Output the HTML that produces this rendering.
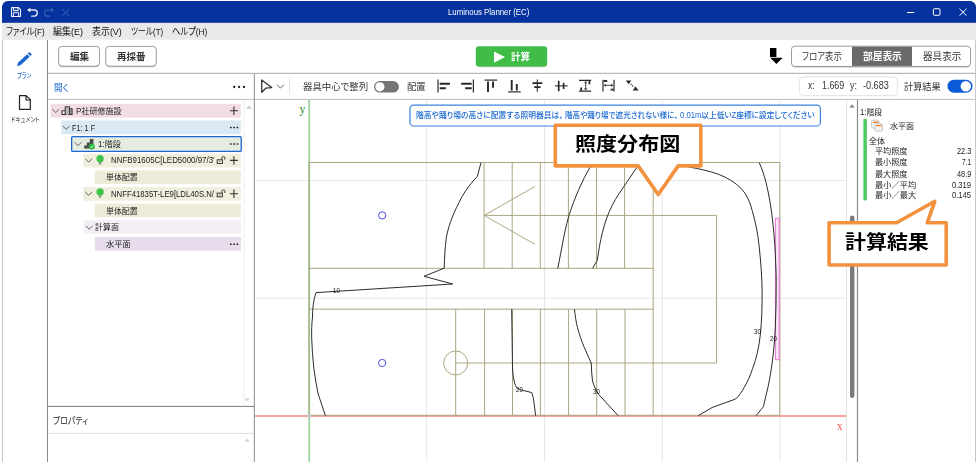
<!DOCTYPE html>
<html lang="ja">
<head>
<meta charset="utf-8">
<title>Luminous Planner (EC)</title>
<style>
html,body{margin:0;padding:0;}
body{width:979px;height:468px;overflow:hidden;background:#fff;position:relative;
 font-family:"Liberation Sans","Noto Sans CJK JP",sans-serif;color:#222;font-size:9px;}
.abs{position:absolute;}
.t{position:absolute;white-space:nowrap;transform-origin:0 50%;font-feature-settings:"palt";}
.btn{position:absolute;box-sizing:border-box;border:1px solid #9c9c9c;border-radius:3.5px;background:#fff;
 box-shadow:0 1px 1.5px rgba(0,0,0,.28);}
.hl{position:absolute;height:1px;}
.vl{position:absolute;width:1px;}
.row{position:absolute;height:13.6px;}
svg{position:absolute;left:0;top:0;overflow:visible;}
</style>
</head>
<body>
<svg width="979" height="468" viewBox="0 0 979 468" fill="none">
<defs><filter id="sh" x="-10%" y="-20%" width="120%" height="150%"><feGaussianBlur stdDeviation="0.7"/></filter></defs>
<path d="M2 23 V7 A6 6 0 0 1 8 1 H970 A6 6 0 0 1 976 7 V23 Z" fill="#05329f"/>
<rect x="2" y="22.8" width="974" height="17" fill="#e9e9e9"/>
<path d="M2.5 40 V462 M975.5 40 V462" stroke="#c8c8c8" stroke-width="1"/>
<path d="M47.5 40 V462" stroke="#8a8a8a" stroke-width="1"/>
<path d="M48 73.3 H975" stroke="#a8a8a8" stroke-width="1"/>
<path d="M48 99.4 H975" stroke="#bcbcbc" stroke-width="1"/>
<path d="M254.3 73.5 V462" stroke="#8a8a8a" stroke-width="1"/>
<path d="M48 406.4 H254" stroke="#7d7d7d" stroke-width="1"/>
<path d="M48 433.4 H254" stroke="#e0e0e0" stroke-width="1"/>
<path d="M244 100 V406" stroke="#efefef" stroke-width="1"/>
<path d="M846.6 100 V462" stroke="#e2e2e2" stroke-width="1"/>
<path d="M857.5 100 V462" stroke="#8a8a8a" stroke-width="1.2"/>
<rect x="850" y="215.5" width="4.4" height="182.5" rx="2.2" fill="#7a7a7a"/>
<rect x="58.9" y="47.4" width="40.4" height="19.8" rx="3.5" fill="#000" opacity="0.28" filter="url(#sh)"/>
<rect x="58.6" y="46.4" width="41.0" height="19.8" rx="3.5" fill="#fff" stroke="#9c9c9c" stroke-width="1"/>
<rect x="106.0" y="47.4" width="50.0" height="19.8" rx="3.5" fill="#000" opacity="0.28" filter="url(#sh)"/>
<rect x="105.7" y="46.4" width="50.6" height="19.8" rx="3.5" fill="#fff" stroke="#9c9c9c" stroke-width="1"/>
<rect x="476.1" y="47.2" width="70.8" height="20" rx="3.5" fill="#000" opacity="0.22" filter="url(#sh)"/>
<rect x="475.8" y="46.2" width="71.4" height="20.4" rx="3.3" fill="#3fbd47"/>
<rect x="791.8" y="47.2" width="178.4" height="20.2" rx="3.2" fill="#000" opacity="0.28" filter="url(#sh)"/>
<rect x="791.5" y="46.2" width="179" height="20.2" rx="3.2" fill="#fff" stroke="#9a9a9a" stroke-width="1"/>
<rect x="852" y="46.7" width="60" height="19.2" fill="#6a6a6a"/>
<rect x="799.3" y="76.8" width="98" height="18.8" rx="4" fill="#fff" stroke="#e4e4e4" stroke-width="1"/>
<rect x="374" y="81" width="25" height="11.6" rx="5.8" fill="#767676"/>
<circle cx="379.9" cy="86.8" r="4.6" fill="#fff"/>
<rect x="947.5" y="79.7" width="25" height="13" rx="6.5" fill="#0a5bd7"/>
<circle cx="965.8" cy="86.2" r="5.2" fill="#fff"/>
<path d="M289.6 78.5 V94.6" stroke="#e2e2e2" stroke-width="1"/>
<rect x="50.6" y="103.90" width="190.3" height="13.7" fill="#f2dde3"/>
<rect x="61.3" y="120.53" width="179.6" height="13.7" fill="#d9e8f2"/>
<rect x="71.65" y="136.65" width="169.6" height="14.8" rx="1.2" fill="#e4ece1" stroke="#1b66d2" stroke-width="1.3"/>
<rect x="83.4" y="153.79" width="157.5" height="13.7" fill="#f0eedc"/>
<rect x="94.8" y="170.42" width="146.1" height="13.7" fill="#eeecd9"/>
<rect x="83.4" y="187.05" width="157.5" height="13.7" fill="#f0eedc"/>
<rect x="94.8" y="203.68" width="146.1" height="13.7" fill="#eeecd9"/>
<rect x="83.4" y="220.31" width="157.5" height="13.7" fill="#f4eef6"/>
<rect x="94.8" y="236.94" width="146.1" height="13.7" fill="#e7dceb"/>
</svg>
<svg width="979" height="468" viewBox="0 0 979 468">
<defs><clipPath id="cv"><rect x="255" y="100" width="591.5" height="362"/></clipPath></defs>
<g clip-path="url(#cv)" fill="none">
<line x1="426.7" y1="100" x2="426.7" y2="462" stroke="#e6e6e6" stroke-width="1"/>
<line x1="544.5" y1="100" x2="544.5" y2="462" stroke="#e6e6e6" stroke-width="1"/>
<line x1="662.3" y1="100" x2="662.3" y2="462" stroke="#e6e6e6" stroke-width="1"/>
<line x1="780.0" y1="100" x2="780.0" y2="462" stroke="#e6e6e6" stroke-width="1"/>
<line x1="255" y1="180.6" x2="847" y2="180.6" stroke="#e6e6e6" stroke-width="1"/>
<line x1="255" y1="298.2" x2="847" y2="298.2" stroke="#e6e6e6" stroke-width="1"/>
<line x1="255" y1="415.95" x2="846.2" y2="415.95" stroke="#f9a3a3" stroke-width="1.9"/>
<line x1="309.2" y1="100" x2="309.2" y2="462" stroke="#a3d3a3" stroke-width="1.9"/>
<g stroke="#aca680" stroke-width="1">
<rect x="309" y="162.5" width="470.8" height="252.8"/>
<line x1="484.1" y1="162.5" x2="484.1" y2="268.3"/>
<line x1="512.2" y1="162.5" x2="512.2" y2="268.3"/>
<line x1="540.3" y1="162.5" x2="540.3" y2="268.3"/>
<line x1="568.4" y1="162.5" x2="568.4" y2="268.3"/>
<line x1="596.5" y1="162.5" x2="596.5" y2="268.3"/>
<line x1="624.6" y1="162.5" x2="624.6" y2="268.3"/>
<line x1="653.2" y1="162.5" x2="653.2" y2="415.3"/>
<line x1="309" y1="268.3" x2="653.2" y2="268.3"/>
<line x1="309" y1="309.2" x2="653.2" y2="309.2"/>
<path d="M484.1 215.4 H716.6 V363 H455.7"/>
<path d="M535 186.5 L484.1 215.4 L535 244.3"/>
<line x1="455.7" y1="309.2" x2="455.7" y2="415.3"/>
<line x1="484.6" y1="309.2" x2="484.6" y2="415.3"/>
<line x1="512.5" y1="309.2" x2="512.5" y2="415.3"/>
<line x1="540.4" y1="309.2" x2="540.4" y2="415.3"/>
<line x1="568.6" y1="309.2" x2="568.6" y2="415.3"/>
<line x1="596.7" y1="309.2" x2="596.7" y2="415.3"/>
<line x1="625.0" y1="309.2" x2="625.0" y2="415.3"/>
<circle cx="455.7" cy="363" r="12"/>
</g>
<circle cx="382.2" cy="215.4" r="3.6" stroke="#4a4ae8" stroke-width="1"/>
<circle cx="382.2" cy="363" r="3.6" stroke="#4a4ae8" stroke-width="1"/>
<rect x="775.4" y="218.3" width="3.8" height="141.4" stroke="#e77ad6" stroke-width="1" fill="#fbe3f6"/>
<g stroke="#2b2b2b" stroke-width="1" stroke-linejoin="round">
<path d="M481 162.5 L477.4 176.3 C468 186 462 196 459 202.6 C452 216 448 228 446.3 237.8 C445 248 444.5 258 444.2 268.2 L424 276.3 L452.7 284 L316 292.6 C313.5 300 312.5 308 312.5 317 C311.7 324 311.5 331 311.7 338.3 C312 348 312.7 358 313.8 368.2 C315 377 316.3 385 318.1 393.8 L325.4 415.6"/>
<path d="M511.7 309.2 L512.5 368 C512.8 374 513.6 379 514.7 383.2 C515.6 386.6 517 388.8 519.8 389.6 L531.8 392.6 C533 396 533.6 399 534 402.4 L535.6 415.6"/>
<path d="M574.5 309.2 C575 315 576 322 577.5 327.6 C579.3 334.5 581.6 341 584 346.8 L591.2 363 C591.4 369 591.8 375 592.5 381 C594 386 596 390.5 598.9 394.7 L618.1 415.6"/>
<path d="M590.6 166 C582 181 574.5 198 568.9 215.6 C566 226 563.8 236 562 246.7 L557.8 268.3"/>
<path d="M637.8 166 L618.9 193.9 C614 201 609.6 210 606.4 218.9 C603.5 227 601.2 237 599.4 246.7 L597.2 260.6 L592.5 268.3"/>
<path d="M688.3 167 C699 168.5 709 171 718.9 174.4 C727.5 177.8 735 182.5 741.1 188.3 C746.3 194 750 201.5 752.2 210.6 C755.5 222 758 234 759.2 246.7 C760.8 262 762 277 762.1 291.3 C762.2 306 761.8 320 760.4 334 C759 347 756.5 358.5 752.7 368.2 C750.4 375.5 747.6 381.8 744.2 387.4 C741.8 392 739 395.8 735.6 399 L712.1 407.5 L698.4 415.6"/>
<path d="M759.2 162.5 C762 169 764.3 175.6 766.1 182.8 C769.3 196 771.6 210 773 224.4 C774.5 238 775.4 252 775.8 266 C776.1 272 776.2 277 776.2 282.7 C776.2 297 776 311 775.4 325.5 C774.8 339 773.7 352 772 364 C770.6 374.5 768.8 384.5 766.4 393.8 L763.4 406.7 L756.1 415.6"/>
</g>
<circle cx="309.2" cy="415.9" r="2.4" fill="#c9c9c9"/>
</g>
</svg>
<svg width="979" height="468" viewBox="0 0 979 468"><rect x="410" y="105.2" width="410.4" height="20.8" rx="3.6" fill="#fff" stroke="#3a84e0" stroke-width="1.2"/></svg>
<svg width="979" height="468" viewBox="0 0 979 468">
<path d="M555.3 125.3 H700.8 V165.9 H678.2 L658.2 194.5 L638.2 165.9 H555.3 Z" fill="#fff" stroke="#f2923e" stroke-width="3.6" stroke-linejoin="round"/>
<path d="M829.1 222.7 H896.6 L934.8 201.3 L927.3 222.7 H946.2 V265 H829.1 Z" fill="#fff" stroke="#f2923e" stroke-width="3.6" stroke-linejoin="round"/>
</svg>
<svg width="979" height="468" viewBox="0 0 979 468" fill="none">
<g stroke="#e8ecf8" stroke-width="1.1" stroke-linejoin="round" stroke-linecap="round">
<path d="M11.5 7.6 H18.6 L20.5 9.5 V16.5 H11.5 Z"/>
<path d="M13.6 7.8 V10.6 H18 V7.8"/>
<path d="M13.4 16.4 V12.8 H18.6 V16.4"/>
<path d="M29 10 H34.2 A3.1 3.1 0 0 1 34.2 16.2 H31.6" stroke-width="1.3"/>
</g>
<path d="M27 10 L30.3 7.7 V12.3 Z" fill="#e8ecf8"/>
<g stroke="#3f5fb6" stroke-width="1.2" stroke-linecap="round">
<path d="M52 10 H47.5 A3.1 3.1 0 0 0 47.5 16.2 H49.4"/>
<path d="M62.3 9.2 L68.8 15.6 M68.8 9.2 L62.3 15.6" stroke-width="1"/>
</g>
<path d="M54.2 10 L50.9 7.7 V12.3 Z" fill="#3f5fb6"/>
<g stroke="#fff" stroke-width="1">
<path d="M907 12.5 H914.2"/>
<rect x="933.4" y="8.7" width="6.6" height="6.6" rx="1"/>
<path d="M959.5 8.8 L966.5 15.6 M966.5 8.8 L959.5 15.6"/>
</g>
<g fill="#1a66d0">
<path d="M29.3 52.0 L31.9 54.6 L30.4 56.1 L27.8 53.5 Z"/>
<path d="M27.1 54.2 L29.7 56.8 L20.8 65.0 L17.0 66.2 L18.2 62.4 Z"/>
</g>
<path d="M19.5 95.6 H26.2 L30.3 99.7 V109.4 H19.5 Z M26 95.8 V100 H30.1" stroke="#222" stroke-width="1.2" stroke-linejoin="round"/>
<path d="M494 51.4 L505 57 L494 62.7 Z" fill="#fff"/>
<path d="M770 48 H776.4 V57 H770 Z M770.2 57.8 H782.7 L776.4 63.9 Z" fill="#000"/>
<path d="M261.7 80 L271.7 87.6 L265.8 88.2 L261.7 92.3 Z" stroke="#333" stroke-width="1.3" stroke-linejoin="round"/>
<path d="M276.9 84.7 L280.4 88.2 L283.9 84.7" stroke="#555" stroke-width="0.9"/>
<g stroke="#2a2a2a">
<path d="M438 79.6 V92.4" stroke-width="1.2"/><path d="M439.7 83.7 H449.9 M439.7 88.3 H445.8" stroke-width="1.9"/>
<path d="M473.4 79.6 V92.4" stroke-width="1.2"/><path d="M461.2 83.7 H471.7 M465.2 88.3 H471.7" stroke-width="1.9"/>
<path d="M484.6 80.1 H497.2" stroke-width="1.2"/><path d="M488 81.6 V91.9 M493 81.6 V87.8" stroke-width="1.9"/>
<path d="M508.1 91.9 H520.7" stroke-width="1.2"/><path d="M511.7 79.9 V90.4 M516.8 84 V90.4" stroke-width="1.9"/>
<path d="M537.3 79.5 V91.8" stroke-width="1.1"/><path d="M532.4 83.2 H542.4 M534.2 87.2 H540.6" stroke-width="1.7"/>
<path d="M555 85.9 H567.7" stroke-width="1.1"/><path d="M558.7 80.7 V91.2 M563.6 82.8 V89" stroke-width="1.7"/>
<path d="M579 80.4 H591.2 M579 91.2 H591.2" stroke-width="1.2"/><path d="M585.7 81.5 V90" stroke-width="0.9"/>
<path d="M589.4 81 V84.3 M581.2 87.6 V90.8" stroke-width="1.8"/>
<path d="M584.4 83.3 L585.7 81.6 L587 83.3 M584.4 88.3 L585.7 90 L587 88.3" stroke-width="0.8"/>
<path d="M603 79.8 V91.6 M614 79.8 V91.6" stroke-width="1.2"/><path d="M604 85.3 H613" stroke-width="0.9"/>
<path d="M603.6 81 H607.2 M610.6 89.7 H613.6" stroke-width="1.8"/>
<path d="M606 84 L604.4 85.3 L606 86.6 M611 84 L612.6 85.3 L611 86.6" stroke-width="0.8"/>
</g>
<path d="M625.8 80.6 H631.4 L628.6 84.2 Z M632.6 90.6 H638.6 L635.6 86.6 Z" fill="#2a2a2a"/>
<path d="M630.6 84 L634.4 87.4" stroke="#2a2a2a" stroke-width="1.1" stroke-dasharray="1.3 1"/>
<path d="M52.3 109.2 L55.7 112.6 L59.1 109.2" stroke="#5a5a5a" stroke-width="0.95"/>
<path d="M62.8 126.0 L66.2 129.4 L69.6 126.0" stroke="#5a5a5a" stroke-width="0.95"/>
<path d="M74.6 142.3 L78.0 145.7 L81.4 142.3" stroke="#5a5a5a" stroke-width="0.95"/>
<path d="M85.3 158.7 L88.7 162.1 L92.1 158.7" stroke="#5a5a5a" stroke-width="0.95"/>
<path d="M85.3 192.0 L88.7 195.3 L92.1 192.0" stroke="#5a5a5a" stroke-width="0.95"/>
<path d="M85.9 225.8 L89.3 229.2 L92.7 225.8" stroke="#5a5a5a" stroke-width="0.95"/>
<rect x="65.3" y="107.2" width="4" height="7" fill="#b9b3b8"/>
<rect x="69.9" y="108.8" width="2.2" height="5.6" fill="#8d878c"/>
<path d="M70.5 110.2 H71.5 M70.5 112.3 H71.5" stroke="#f2dde3" stroke-width="1"/>
<g stroke="#3c3c3c" stroke-width="1.05" stroke-linejoin="round">
<path d="M61.9 114.3 V110.8 H64.9 M65.2 114.3 V106.8 H69.5 V114.3 M69.6 108.7 H72.1 V114.3 M61.4 114.4 H66.6 M68.2 114.4 H72.6"/>
</g>
<path d="M84.2 148.4 V145.4 H86.8 V142.5 H89.8 V139.1 H93.4 V148.4 Z" fill="#4a4a4a"/>
<circle cx="91.8" cy="146.6" r="3.0" fill="#27b43a"/>
<path d="M90.3 146.7 L91.4 147.8 L93.3 145.5" stroke="#fff" stroke-width="0.9"/>
<path d="M98.8 161.9 H101.4 V163.9 L100.1 165.0 L98.8 163.9 Z" fill="#9a9a9a"/>
<circle cx="100.1" cy="158.7" r="3.65" fill="#3dc24a"/>
<rect x="217.2" y="159.8" width="5.2" height="3.7" stroke="#333" stroke-width="0.95"/>
<circle cx="219.8" cy="161.6" r="0.55" fill="#333"/>
<path d="M221.9 159.8 V158.0 A1.45 1.45 0 0 1 224.8 158.0 V159.7" stroke="#333" stroke-width="0.9"/>
<path d="M229.9 160.4 H237.9 M233.9 156.2 V164.8" stroke="#333" stroke-width="1.1"/>
<path d="M98.8 195.2 H101.4 V197.2 L100.1 198.3 L98.8 197.2 Z" fill="#9a9a9a"/>
<circle cx="100.1" cy="192.0" r="3.65" fill="#3dc24a"/>
<rect x="217.2" y="193.1" width="5.2" height="3.7" stroke="#333" stroke-width="0.95"/>
<circle cx="219.8" cy="194.9" r="0.55" fill="#333"/>
<path d="M221.9 193.1 V191.3 A1.45 1.45 0 0 1 224.8 191.3 V193.0" stroke="#333" stroke-width="0.9"/>
<path d="M229.9 193.7 H237.9 M233.9 189.5 V198.1" stroke="#333" stroke-width="1.1"/>
<path d="M229.9 110.7 H237.9 M233.9 106.5 V114.9" stroke="#333" stroke-width="1.1"/>
<rect x="229.95" y="126.65" width="1.7" height="1.7" rx="0.4" fill="#222"/>
<rect x="233.25" y="126.65" width="1.7" height="1.7" rx="0.4" fill="#222"/>
<rect x="236.55" y="126.65" width="1.7" height="1.7" rx="0.4" fill="#222"/>
<rect x="229.95" y="143.15" width="1.7" height="1.7" rx="0.4" fill="#222"/>
<rect x="233.25" y="143.15" width="1.7" height="1.7" rx="0.4" fill="#222"/>
<rect x="236.55" y="143.15" width="1.7" height="1.7" rx="0.4" fill="#222"/>
<rect x="229.95" y="243.39" width="1.7" height="1.7" rx="0.4" fill="#222"/>
<rect x="233.25" y="243.39" width="1.7" height="1.7" rx="0.4" fill="#222"/>
<rect x="236.55" y="243.39" width="1.7" height="1.7" rx="0.4" fill="#222"/>
<rect x="233.05" y="85.85" width="2.3" height="2.3" rx="1.15" fill="#222"/>
<rect x="237.95" y="85.85" width="2.3" height="2.3" rx="1.15" fill="#222"/>
<rect x="242.85" y="85.85" width="2.3" height="2.3" rx="1.15" fill="#222"/>
<path d="M246 109 L249 105.6 L252 109 Z" fill="#d2d2d2"/>
<path d="M244.6 398.6 L247.2 401.6 L249.8 398.6 Z" fill="#d2d2d2"/>
<path d="M244.6 441.6 L247.2 438.6 L249.8 441.6 Z" fill="#d2d2d2"/>
<path d="M849.4 107.6 L852 104.6 L854.6 107.6 Z" fill="#777"/>
<rect x="863.4" y="119" width="3.5" height="81.4" fill="#4ccb60"/>
<rect x="871.5" y="120.2" width="7.6" height="7.8" rx="1.3" fill="#f3f3f3" stroke="#c6c6c6" stroke-width="0.9"/>
<path d="M873 122.3 H878.4" stroke="#f07a1e" stroke-width="1.3"/>
<rect x="874.9" y="123.6" width="7.6" height="7.6" rx="1.3" fill="#f3f3f3" stroke="#c6c6c6" stroke-width="0.9"/>
<path d="M876.2 125.6 H881.4" stroke="#f07a1e" stroke-width="1.3"/>
</svg>
<div class="t" style='left:447.9px;top:9.40px;font-size:8.2px;line-height:8.2px;color:#fff;transform:scaleX(0.9552);'>Luminous Planner (EC)</div>
<div class="t" style='left:6.2px;top:27.15px;font-size:9.7px;line-height:9.7px;color:#111;transform:scaleX(0.8427);'>ファイル(F)</div>
<div class="t" style='left:53.4px;top:27.15px;font-size:9.7px;line-height:9.7px;color:#111;transform:scaleX(0.9258);'>編集(E)</div>
<div class="t" style='left:92px;top:27.15px;font-size:9.7px;line-height:9.7px;color:#111;transform:scaleX(0.9227);'>表示(V)</div>
<div class="t" style='left:131px;top:27.15px;font-size:9.7px;line-height:9.7px;color:#111;transform:scaleX(0.8022);'>ツール(T)</div>
<div class="t" style='left:171.6px;top:27.15px;font-size:9.7px;line-height:9.7px;color:#111;transform:scaleX(0.8582);'>ヘルプ(H)</div>
<div class="t" style='left:17.3px;top:73.10px;font-size:6.6px;line-height:6.6px;color:#1a66d0;font-weight:500;transform:scaleX(0.8170);'>プラン</div>
<div class="t" style='left:10.6px;top:117.10px;font-size:6.6px;line-height:6.6px;color:#333;transform:scaleX(0.8553);'>ドキュメント</div>
<div class="t" style='left:69.7px;top:51.60px;font-size:9.6px;line-height:9.6px;color:#333;font-weight:bold;transform:scaleX(1.0007);'>編集</div>
<div class="t" style='left:116.8px;top:51.60px;font-size:9.6px;line-height:9.6px;color:#333;font-weight:bold;transform:scaleX(0.9902);'>再採番</div>
<div class="t" style='left:510.5px;top:51.70px;font-size:9.6px;line-height:9.6px;color:#fff;font-weight:bold;transform:scaleX(0.9902);'>計算</div>
<div class="t" style='left:802px;top:52.40px;font-size:9.8px;line-height:9.8px;color:#333;transform:scaleX(0.8614);'>フロア表示</div>
<div class="t" style='left:863px;top:52.40px;font-size:9.8px;line-height:9.8px;color:#fff;font-weight:bold;transform:scaleX(0.9901);'>部屋表示</div>
<div class="t" style='left:922.6px;top:52.40px;font-size:9.8px;line-height:9.8px;color:#333;transform:scaleX(0.9799);'>器具表示</div>
<div class="t" style='left:54.2px;top:82.70px;font-size:9.6px;line-height:9.6px;color:#1a66d0;transform:scaleX(0.9019);'>開く</div>
<div class="t" style='left:302.8px;top:81.90px;font-size:9.4px;line-height:9.4px;color:#333;transform:scaleX(1.0043);'>器具中心で整列</div>
<div class="t" style='left:407px;top:81.90px;font-size:9.4px;line-height:9.4px;color:#333;transform:scaleX(0.9965);'>配置</div>
<div class="t" style='left:807.6px;top:81.40px;font-size:10.4px;line-height:10.4px;color:#333;transform:scaleX(0.8402);'>x:</div>
<div class="t" style='left:822.4px;top:81.40px;font-size:10.4px;line-height:10.4px;color:#333;transform:scaleX(0.8533);'>1.669</div>
<div class="t" style='left:849.8px;top:81.40px;font-size:10.4px;line-height:10.4px;color:#333;transform:scaleX(0.8649);'>y:</div>
<div class="t" style='left:863px;top:81.40px;font-size:10.4px;line-height:10.4px;color:#333;transform:scaleX(0.8755);'>-0.683</div>
<div class="t" style='left:904px;top:81.75px;font-size:9.5px;line-height:9.5px;color:#333;transform:scaleX(0.9654);'>計算結果</div>
<div class="t" style='left:75.5px;top:107.80px;font-size:8.2px;line-height:8.2px;color:#222;transform:scaleX(0.9805);'>P社研修施設</div>
<div class="t" style='left:72px;top:123.53px;font-size:8.4px;line-height:8.4px;color:#222;transform:scaleX(0.8744);'>F1: 1 F</div>
<div class="t" style='left:97.8px;top:141.16px;font-size:8.2px;line-height:8.2px;color:#222;transform:scaleX(0.9777);'>1:階段</div>
<div class="t" style='left:110.7px;top:156.39px;font-size:8.6px;line-height:8.6px;color:#222;transform:scaleX(0.9210);'>NNFB91605C[LED5000/97/3'</div>
<div class="t" style='left:106px;top:174.42px;font-size:8.2px;line-height:8.2px;color:#222;transform:scaleX(0.9675);'>単体配置</div>
<div class="t" style='left:110.7px;top:189.65px;font-size:8.6px;line-height:8.6px;color:#222;transform:scaleX(0.9021);'>NNFF41835T-LE9[LDL40S.N/</div>
<div class="t" style='left:106px;top:207.68px;font-size:8.2px;line-height:8.2px;color:#222;transform:scaleX(0.9675);'>単体配置</div>
<div class="t" style='left:95.2px;top:223.91px;font-size:8.2px;line-height:8.2px;color:#222;transform:scaleX(0.9765);'>計算面</div>
<div class="t" style='left:106px;top:240.54px;font-size:8.2px;line-height:8.2px;color:#222;transform:scaleX(1.0009);'>水平面</div>
<div class="t" style='left:53px;top:415.90px;font-size:9.4px;line-height:9.4px;color:#222;transform:scaleX(0.8377);'>プロパティ</div>
<div class="t" style='left:416.2px;top:111.50px;font-size:8.2px;line-height:8.2px;color:#1a68d2;font-weight:500;transform:scaleX(0.9524);'>階高や踊り場の高さに配置する照明器具は、</div>
<div class="t" style='left:565px;top:111.50px;font-size:8.2px;line-height:8.2px;color:#1a68d2;font-weight:500;transform:scaleX(0.9235);'>階高や踊り場で遮光されない様に、</div>
<div class="t" style='left:679.8px;top:111.50px;font-size:8.2px;line-height:8.2px;color:#1a68d2;font-weight:500;transform:scaleX(0.9375);'>0.01m以上低いZ座標に設定してください</div>
<div class="t" style='left:299.6px;top:103.30px;font-size:12px;line-height:12px;color:#2f8a2f;font-family:"Liberation Serif",serif;transform:scaleX(1.0000);'>y</div>
<div class="t" style='left:836.8px;top:419.60px;font-size:12px;line-height:12px;color:#f45c5c;font-family:"Liberation Serif",serif;transform:scaleX(0.9333);'>x</div>
<div class="t" style='left:333.1px;top:288.00px;font-size:6.6px;line-height:6.6px;color:#111;transform:scaleX(0.9260);'>10</div>
<div class="t" style='left:515.6px;top:387.10px;font-size:6.6px;line-height:6.6px;color:#111;transform:scaleX(0.9260);'>20</div>
<div class="t" style='left:592.5px;top:389.30px;font-size:6.6px;line-height:6.6px;color:#111;transform:scaleX(0.9260);'>30</div>
<div class="t" style='left:754.4px;top:329.40px;font-size:6.6px;line-height:6.6px;color:#111;transform:scaleX(0.9260);'>30</div>
<div class="t" style='left:770.3000000000001px;top:336.30px;font-size:6.6px;line-height:6.6px;color:#111;transform:scaleX(0.9260);'>20</div>
<div class="t" style='left:575px;top:134.70px;font-size:19px;line-height:19px;color:#000;font-weight:bold;transform:scaleX(1.1082);'>照度分布図</div>
<div class="t" style='left:845.4px;top:232.90px;font-size:19px;line-height:19px;color:#000;font-weight:bold;transform:scaleX(1.1024);'>計算結果</div>
<div class="t" style='left:860.0px;top:108.60px;font-size:8.2px;line-height:8.2px;color:#222;transform:scaleX(0.9432);'>1:階段</div>
<div class="t" style='left:889.9px;top:122.60px;font-size:8.2px;line-height:8.2px;color:#222;transform:scaleX(0.9846);'>水平面</div>
<div class="t" style='left:868.7px;top:137.70px;font-size:8.2px;line-height:8.2px;color:#222;transform:scaleX(0.9762);'>全体</div>
<div class="t" style='left:875.3px;top:147.70px;font-size:8.2px;line-height:8.2px;color:#222;transform:scaleX(0.9919);'>平均照度</div>
<div class="t" style='left:957px;top:147.70px;font-size:8.2px;line-height:8.2px;color:#222;transform:scaleX(0.8973);'>22.3</div>
<div class="t" style='left:875.3px;top:159.40px;font-size:8.2px;line-height:8.2px;color:#222;transform:scaleX(0.9919);'>最小照度</div>
<div class="t" style='left:962.3px;top:159.40px;font-size:8.2px;line-height:8.2px;color:#222;transform:scaleX(0.7901);'>7.1</div>
<div class="t" style='left:875.3px;top:170.50px;font-size:8.2px;line-height:8.2px;color:#222;transform:scaleX(0.9919);'>最大照度</div>
<div class="t" style='left:957px;top:170.50px;font-size:8.2px;line-height:8.2px;color:#222;transform:scaleX(0.8973);'>48.9</div>
<div class="t" style='left:875.3px;top:182.00px;font-size:8.2px;line-height:8.2px;color:#222;transform:scaleX(1.0060);'>最小／平均</div>
<div class="t" style='left:952.2px;top:182.00px;font-size:8.2px;line-height:8.2px;color:#222;transform:scaleX(0.9317);'>0.319</div>
<div class="t" style='left:875.3px;top:192.20px;font-size:8.2px;line-height:8.2px;color:#222;transform:scaleX(1.0060);'>最小／最大</div>
<div class="t" style='left:952.2px;top:192.20px;font-size:8.2px;line-height:8.2px;color:#222;transform:scaleX(0.9317);'>0.145</div>
</body>
</html>
